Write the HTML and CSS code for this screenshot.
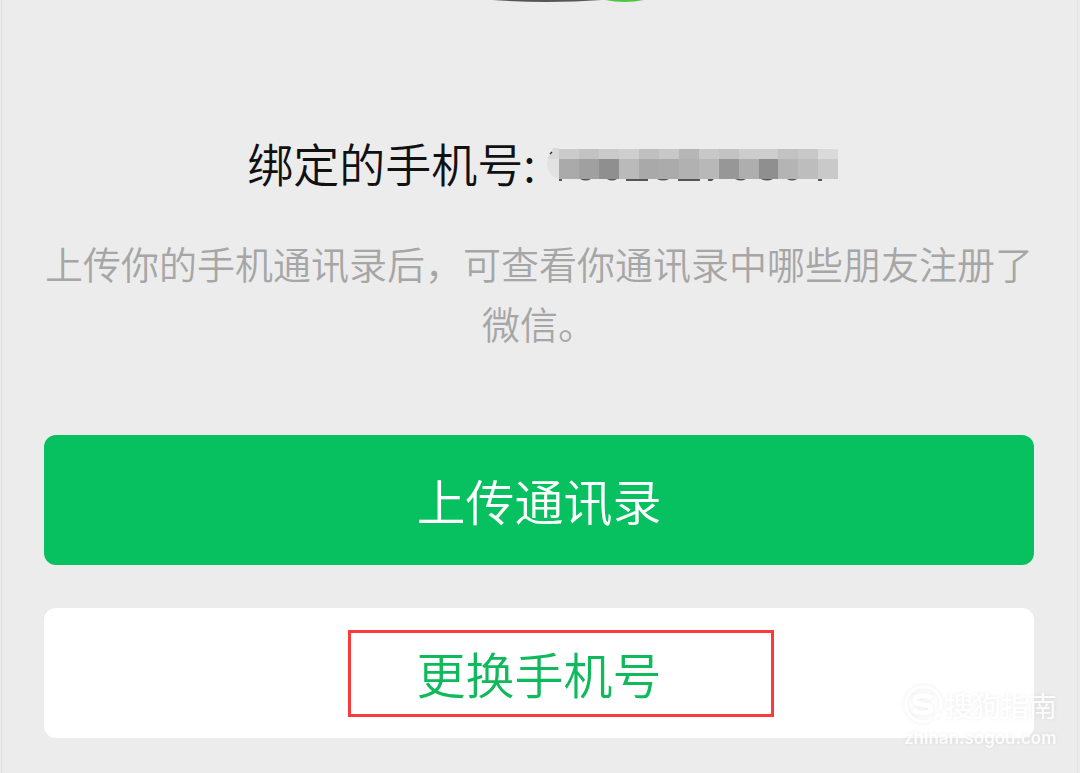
FILE: index.html
```html
<!DOCTYPE html>
<html lang="zh-CN">
<head>
    <meta charset="UTF-8">
    <meta name="viewport" content="width=device-width, initial-scale=1.0">
    <title>绑定手机号</title>
    <link rel="stylesheet" href="styles.css">
</head>
<body>
    <main class="page">
        <svg class="logo" width="210" height="4" viewBox="0 0 210 4" aria-hidden="true">
            <path d="M58 0Q113 4 168 0Z" fill="#555"/>
            <path d="M171 0Q191 4 210 0Z" fill="#4cc840"/>
        </svg>

        <h1 class="phone">
            <span>绑定的手机号:</span>
            <svg class="mosaic" width="291" height="34" viewBox="0 0 291 34" role="img" aria-label="手机号已隐藏">
                <path d="M12 0H8Q0 5 0 17Q2 29 12 31Z" fill="#e2e2e2"/>
                <path d="M12 0H6L1 11H12Z" fill="#d9d9d9"/>
                <path d="M3 6L5 4" stroke="#333" stroke-width="1.5"/>
                <g shape-rendering="crispEdges">
                    <path d="M12 1h20v10h-20z" fill="#cbcbcb"/>
                    <path d="M32 1h20v10h-20z" fill="#c2c2c2"/>
                    <path d="M52 1h20v10h-20z" fill="#cacaca"/>
                    <path d="M72 1h20v10h-20z" fill="#cfcfcf"/>
                    <path d="M92 1h20v10h-20z" fill="#c0c0c0"/>
                    <path d="M112 1h20v10h-20z" fill="#c8c8c8"/>
                    <path d="M132 1h20v10h-20z" fill="#b6b6b6"/>
                    <path d="M152 1h20v10h-20z" fill="#c8c8c8"/>
                    <path d="M172 1h20v10h-20z" fill="#c2c2c2"/>
                    <path d="M192 1h39v10h-39z" fill="#cdcdcd"/>
                    <path d="M231 1h20v10h-20z" fill="#c2c2c2"/>
                    <path d="M251 1h20v10h-20z" fill="#c8c8c8"/>
                    <path d="M271 1h20v10h-20z" fill="#dadada"/>
                    <path d="M12 11h20v20h-20z" fill="#aaa"/>
                    <path d="M32 11h20v20h-20z" fill="#a0a0a0"/>
                    <path d="M52 11h20v20h-20z" fill="#8f8f8f"/>
                    <path d="M72 11h20v20h-20z" fill="#bababa"/>
                    <path d="M92 11h20v20h-20z" fill="#a9a9a9"/>
                    <path d="M112 11h20v20h-20z" fill="#ababab"/>
                    <path d="M132 11h20v20h-20z" fill="#b1b1b1"/>
                    <path d="M152 11h20v20h-20z" fill="#b8b8b8"/>
                    <path d="M172 11h20v20h-20z" fill="#979797"/>
                    <path d="M192 11h20v20h-20z" fill="#aeaeae"/>
                    <path d="M212 11h20v20h-20z" fill="#8f8f8f"/>
                    <path d="M231 11h20v20h-20z" fill="#b4b4b4"/>
                    <path d="M251 11h20v20h-20z" fill="#bdbdbd"/>
                    <path d="M271 11h20v20h-20z" fill="#c9c9c9"/>
                </g>
                <!-- bottoms of the digits -->
                <g fill="#555">
                    <path d="M12 31h3v2h-3zM79 31h22v2h-22zM131 31h22v2h-22zM271 31h4v2h-4zM161 31h6l-2 2h-4z"/>
                    <path d="M33 31h11q-5 3-11 0zM60 31h10q-5 3-10 0zM110 31h12q-6 3-12 0zM188 31h11q-5 3-11 0zM214 31h12q-6 3-12 0zM240 31h10q-5 3-10 0z"/>
                </g>
            </svg>
        </h1>

        <p class="tip">上传你的手机通讯录后，可查看你通讯录中哪些朋友注册了微信。</p>

        <div class="actions">
            <button type="button" class="btn primary">上传通讯录</button>
            <button type="button" class="btn"><span class="marked">更换手机号</span></button>
        </div>

        <div class="watermark">
            <div class="brand">
                <svg width="40" height="40" viewBox="0 0 40 40" fill="none" stroke="#fff" aria-hidden="true">
                    <path d="M27 35A17.500 17.500 0 1 1 36 25" stroke-width="3"/>
                    <path d="M28 13C22 9 11 10 11 15C11 21 27 18 27 24C27 29 15 29 9 25" stroke-width="5"/>
                    <path d="M30 34L35 29" stroke-width="3"/>
                </svg>
                <span>搜狗指南</span>
            </div>
            <div class="site">zhinan.sogou.com</div>
        </div>
    </main>
</body>
</html>
```
FILE: styles.css
```css
* {
    box-sizing: border-box;
}
body {
    margin: 0;
    background-color: #ececec;
    font-family: "Noto Sans CJK SC", sans-serif;
    font-weight: 350;
}
.page {
    position: relative;
    min-height: 100vh;
    margin: 0 2px 0 1px;
    padding: 0 43px 36px 42px;
    border-left: 1px solid #e0e0e0;
    border-right: 1px solid #e4e4e4;
}
.logo {
    display: block;
    margin: 0 auto;
}
.phone {
    display: flex;
    justify-content: center;
    align-items: center;
    gap: 11px;
    margin: 124px 0 0;
    padding-left: 7px;
    font-size: 46px;
    font-weight: 350;
    line-height: 68px;
    color: #111;
}
.mosaic {
    flex: none;
    margin-top: 6px;
}
.tip {
    margin: 37px 0 0;
    font-size: 38px;
    line-height: 60px;
    text-align: center;
    color: #a6a6a6;
}
.actions {
    display: flex;
    flex-direction: column;
    gap: 43px;
    margin-top: 82px;
}
.btn {
    display: flex;
    justify-content: center;
    align-items: center;
    height: 130px;
    padding: 0;
    border: none;
    border-radius: 12px;
    background-color: #fff;
    color: #10b95c;
    font-family: inherit;
    font-size: 49px;
    font-weight: 350;
    line-height: 72px;
    cursor: pointer;
}
.btn.primary {
    background-color: #07c160;
    color: #fff;
}
.marked {
    position: relative;
}
.marked::after {
    content: "";
    position: absolute;
    top: -7px;
    left: -68px;
    right: -112px;
    bottom: -8px;
    border: 3px solid #fb3b3b;
}
.watermark {
    position: absolute;
    right: 20px;
    bottom: 24px;
    color: #fff;
    filter: drop-shadow(0 0 2px rgba(0, 0, 0, 0.1));
    opacity: 0.8;
    pointer-events: none;
}
.brand {
    display: flex;
    align-items: center;
    gap: 1px;
    font-size: 28px;
    font-weight: 400;
    line-height: 42px;
}
.site {
    font-family: Inter, sans-serif;
    font-size: 17px;
    font-weight: 600;
    line-height: 24px;
}
```
